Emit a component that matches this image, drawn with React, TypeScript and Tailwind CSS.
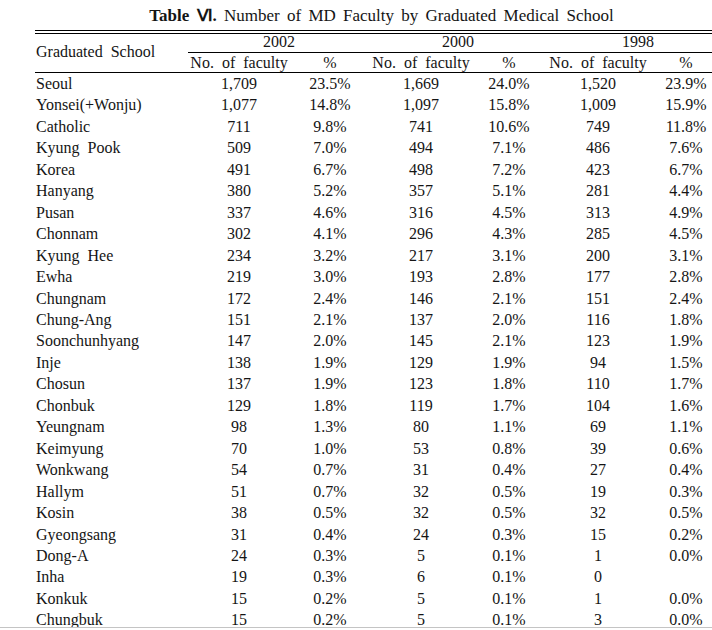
import React from "react";

type Row = [string, string, string, string, string, string, string];

const rows: Row[] = [
  ["Seoul", "1,709", "23.5%", "1,669", "24.0%", "1,520", "23.9%"],
  ["Yonsei(+Wonju)", "1,077", "14.8%", "1,097", "15.8%", "1,009", "15.9%"],
  ["Catholic", "711", "9.8%", "741", "10.6%", "749", "11.8%"],
  ["Kyung Pook", "509", "7.0%", "494", "7.1%", "486", "7.6%"],
  ["Korea", "491", "6.7%", "498", "7.2%", "423", "6.7%"],
  ["Hanyang", "380", "5.2%", "357", "5.1%", "281", "4.4%"],
  ["Pusan", "337", "4.6%", "316", "4.5%", "313", "4.9%"],
  ["Chonnam", "302", "4.1%", "296", "4.3%", "285", "4.5%"],
  ["Kyung Hee", "234", "3.2%", "217", "3.1%", "200", "3.1%"],
  ["Ewha", "219", "3.0%", "193", "2.8%", "177", "2.8%"],
  ["Chungnam", "172", "2.4%", "146", "2.1%", "151", "2.4%"],
  ["Chung-Ang", "151", "2.1%", "137", "2.0%", "116", "1.8%"],
  ["Soonchunhyang", "147", "2.0%", "145", "2.1%", "123", "1.9%"],
  ["Inje", "138", "1.9%", "129", "1.9%", "94", "1.5%"],
  ["Chosun", "137", "1.9%", "123", "1.8%", "110", "1.7%"],
  ["Chonbuk", "129", "1.8%", "119", "1.7%", "104", "1.6%"],
  ["Yeungnam", "98", "1.3%", "80", "1.1%", "69", "1.1%"],
  ["Keimyung", "70", "1.0%", "53", "0.8%", "39", "0.6%"],
  ["Wonkwang", "54", "0.7%", "31", "0.4%", "27", "0.4%"],
  ["Hallym", "51", "0.7%", "32", "0.5%", "19", "0.3%"],
  ["Kosin", "38", "0.5%", "32", "0.5%", "32", "0.5%"],
  ["Gyeongsang", "31", "0.4%", "24", "0.3%", "15", "0.2%"],
  ["Dong-A", "24", "0.3%", "5", "0.1%", "1", "0.0%"],
  ["Inha", "19", "0.3%", "6", "0.1%", "0", ""],
  ["Konkuk", "15", "0.2%", "5", "0.1%", "1", "0.0%"],
  ["Chungbuk", "15", "0.2%", "5", "0.1%", "3", "0.0%"],
];

const cols = "grid grid-cols-[153px_102px_80px_102px_74px_104px_72px]";

export default function App() {
  return (
    <div className="w-[712px] h-[630px] overflow-hidden bg-white text-[#151515] font-[family-name:Liberation_Serif,Times_New_Roman,serif]">
      <div className="h-[628px] overflow-hidden border-b border-[#c4c4c4]">
        <div className="w-[687px] ml-[35px]">
          <div className="h-[30px] pt-[6px] pl-[6px] text-center text-[17px] leading-[20px] whitespace-nowrap [word-spacing:3px]">
            <span className="font-bold">Table </span>
            <span className="font-bold">Ⅵ.</span>
            <span> Number of MD Faculty by Graduated Medical School</span>
          </div>
          <div className="h-[4px] border-y border-black" />
          <div className={`${cols} grid-rows-[19px_19px] border-b border-black text-[16px] [word-spacing:4px]`}>
            <div className="row-span-2 flex items-center pl-[1px] pb-[2px] whitespace-nowrap">
              Graduated School
            </div>
            <div className="col-span-2 border-b border-black text-center leading-[15px]">2002</div>
            <div className="col-span-2 border-b border-black text-center leading-[15px]">2000</div>
            <div className="col-span-2 border-b border-black text-center leading-[15px] pl-[8px]">1998</div>
            <div className="text-center leading-[19px] whitespace-nowrap">No. of faculty</div>
            <div className="text-center leading-[19px]">%</div>
            <div className="text-center leading-[19px] whitespace-nowrap">No. of faculty</div>
            <div className="text-center leading-[19px]">%</div>
            <div className="text-center leading-[19px] whitespace-nowrap">No. of faculty</div>
            <div className="text-center leading-[19px]">%</div>
          </div>
          <div className="text-[16px]">
            {rows.map((r) => (
              <div key={r[0]} className={`${cols} h-[21.46px] leading-[21.46px]`}>
                <div className="pl-[1px] whitespace-nowrap [word-spacing:4px]">{r[0]}</div>
                <div className="text-center">{r[1]}</div>
                <div className="text-center">{r[2]}</div>
                <div className="text-center">{r[3]}</div>
                <div className="text-center">{r[4]}</div>
                <div className="text-center">{r[5]}</div>
                <div className="text-center">{r[6]}</div>
              </div>
            ))}
          </div>
        </div>
      </div>
    </div>
  );
}
